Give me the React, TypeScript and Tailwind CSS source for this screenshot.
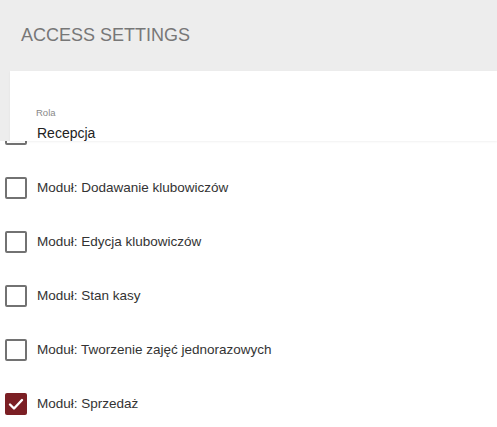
const modules = [
  { label: "", checked: false },
  { label: "Moduł: Dodawanie klubowiczów", checked: false },
  { label: "Moduł: Edycja klubowiczów", checked: false },
  { label: "Moduł: Stan kasy", checked: false },
  { label: "Moduł: Tworzenie zajęć jednorazowych", checked: false },
  { label: "Moduł: Sprzedaż", checked: true },
];

function Box({ checked }: { checked: boolean }) {
  if (checked) {
    return (
      <div className="flex size-[22px] items-center justify-center rounded-[2px] bg-[#7b1f24]">
        <svg viewBox="0 0 22 22" className="size-[22px]" fill="none">
          <path d="M5 11.5 L9 15.5 L17 7" stroke="white" strokeWidth="2.4" strokeLinecap="round" strokeLinejoin="round" />
        </svg>
      </div>
    );
  }
  return <div className="size-[22px] rounded-[2px] border-2 border-[#727272] bg-white" />;
}

export default function App() {
  return (
    <div className="h-[427px] w-[497px] overflow-hidden bg-white font-['Liberation_Sans',Arial,sans-serif]">
      <div className="flex h-[71px] items-center bg-[#ededed] px-[21px]">
        <h1 className="text-[18px] text-[#777]">ACCESS SETTINGS</h1>
      </div>

      <div className="relative z-10 bg-[#ededed] pl-[10px]">
        <div className="h-[70px] bg-white px-[26px] pt-[36px] shadow-[0_1px_2px_rgba(0,0,0,0.06)]">
          <p className="text-[9.5px] leading-[12px] text-[#888]">Rola</p>
          <p className="mt-[5px] pl-px text-[14px] leading-[18px] text-[#222]">Recepcja</p>
        </div>
      </div>

      <ul className="-mt-[34px]">
        {modules.map((m, i) => (
          <li key={i} className="flex h-[54px] items-center gap-[10px] pl-[5px]">
            <Box checked={m.checked} />
            {m.label && <span className="text-[13.5px] text-[#333]">{m.label}</span>}
          </li>
        ))}
      </ul>
    </div>
  );
}
